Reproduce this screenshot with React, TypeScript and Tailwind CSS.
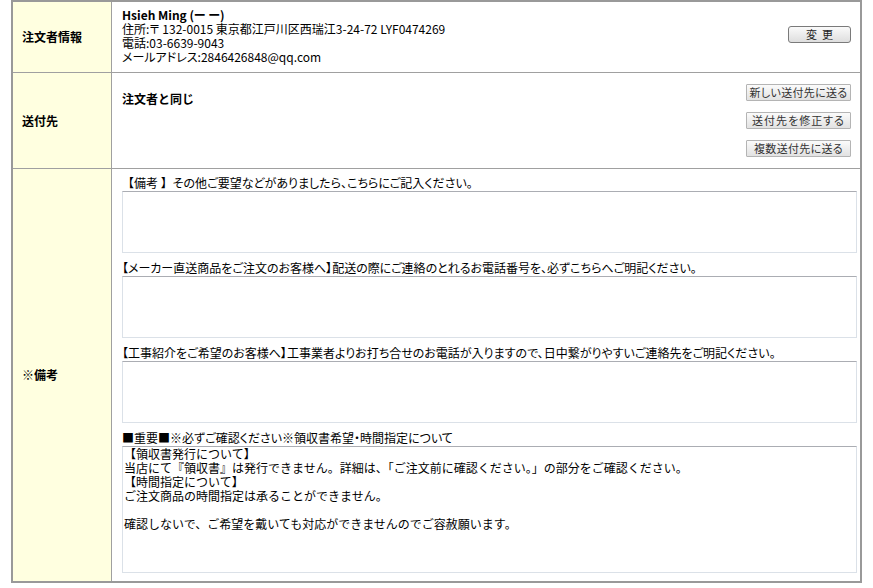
import React from 'react';

const font = "font-['Noto_Sans_CJK_JP','Liberation_Sans',sans-serif]";
const palt = "[font-feature-settings:'palt']";

const NOTICE = `【領収書発行について】
当店にて『領収書』は発行できません。詳細は、「ご注文前に確認ください。」の部分をご確認ください。
【時間指定について】
ご注文商品の時間指定は承ることができません。

確認しないで、ご希望を戴いても対応ができませんのでご容赦願います。`;

const remarks: React.ReactNode[] = [
  <>
    <span className="[font-feature-settings:normal]">【備考 】</span>その他ご要望などがありましたら、こちらにご記入ください。
  </>,
  '【メーカー直送商品をご注文のお客様へ】配送の際にご連絡のとれるお電話番号を、必ずこちらへご明記ください。',
  '【工事紹介をご希望のお客様へ】工事業者よりお打ち合せのお電話が入りますので、日中繋がりやすいご連絡先をご明記ください。',
];

function Label({ children }: { children: React.ReactNode }) {
  return (
    <div className="w-[99px] shrink-0 border-r border-[#a0a0a0] bg-[#ffffe0] pl-[9px] flex items-center text-[12px] font-bold text-black">
      {children}
    </div>
  );
}

function SquareButton({ children, wide }: { children: React.ReactNode; wide?: boolean }) {
  return (
    <button
      className={`${palt} ${wide ? 'tracking-[1px]' : 'tracking-[0.3px]'} w-[105px] h-[17px] whitespace-nowrap border border-[#b4b4b4] rounded-[1px] bg-gradient-to-b from-[#fbfbfb] to-[#e2e2e2] text-[11px] leading-[15px] text-[#333]`}
    >
      {children}
    </button>
  );
}

function Remark({ label }: { label: React.ReactNode }) {
  return (
    <div className="flex flex-col">
      <div className={`${palt} leading-[16px] text-[12px] whitespace-nowrap`}>{label}</div>
      <textarea className="h-[62px] w-full resize-none overflow-hidden border border-[#dbe1e8] border-t-[#abadb3] bg-white outline-none" />
    </div>
  );
}

export default function App() {
  return (
    <div className={`${font} bg-white w-[873px] h-[588px] text-black`}>
      <div className="ml-[11px] w-[851px] border-2 border-[#999999]">
        {/* 注文者情報 */}
        <div className="flex h-[71px] border-b border-[#a0a0a0]">
          <Label>注文者情報</Label>
          <div className="flex-1 flex justify-between pl-[10px] pr-[9px] pt-[6px]">
            <div className={`${palt} text-[12px] leading-[14px]`}>
              <div className="font-bold">Hsieh Ming (ー ー)</div>
              <div>住所:〒 132-0015 東京都江戸川区西瑞江3-24-72 LYF0474269</div>
              <div>電話:03-6639-9043</div>
              <div>メールアドレス:2846426848@qq.com</div>
            </div>
            <button className="mt-[18px] w-[63px] h-[17px] border border-[#7a7a7a] rounded-[3px] bg-gradient-to-b from-[#fafafa] to-[#dedede] text-[11px] leading-[15px] text-[#222]">
              変&nbsp;&nbsp;更
            </button>
          </div>
        </div>

        {/* 送付先 */}
        <div className="flex h-[96px] border-b border-[#a0a0a0]">
          <Label>送付先</Label>
          <div className="flex-1 flex justify-between pl-[10px] pr-[9px]">
            <div className="pt-[19px] text-[12px] leading-[14px] font-bold">注文者と同じ</div>
            <div className="flex flex-col gap-[11px] pt-[11px]">
              <SquareButton>新しい送付先に送る</SquareButton>
              <SquareButton wide>送付先を修正する</SquareButton>
              <SquareButton>複数送付先に送る</SquareButton>
            </div>
          </div>
        </div>

        {/* 備考 */}
        <div className="flex h-[412px]">
          <Label>※備考</Label>
          <div className="flex-1 flex flex-col gap-[7px] pl-[10px] pr-[3px] pt-[6px]">
            {remarks.map((r, i) => (
              <Remark key={i} label={r} />
            ))}
            <div className="flex flex-col">
              <div className={`${palt} leading-[16px] text-[12px] whitespace-nowrap`}>
                ■重要■※必ずご確認ください※領収書希望・時間指定について
              </div>
              <textarea
                readOnly
                defaultValue={NOTICE}
                className={`${font} h-[127px] w-full resize-none overflow-hidden border border-[#dbe1e8] border-t-[#abadb3] bg-white px-[1px] pt-0 text-[12px] leading-[14px] outline-none`}
              />
            </div>
          </div>
        </div>
      </div>
    </div>
  );
}
